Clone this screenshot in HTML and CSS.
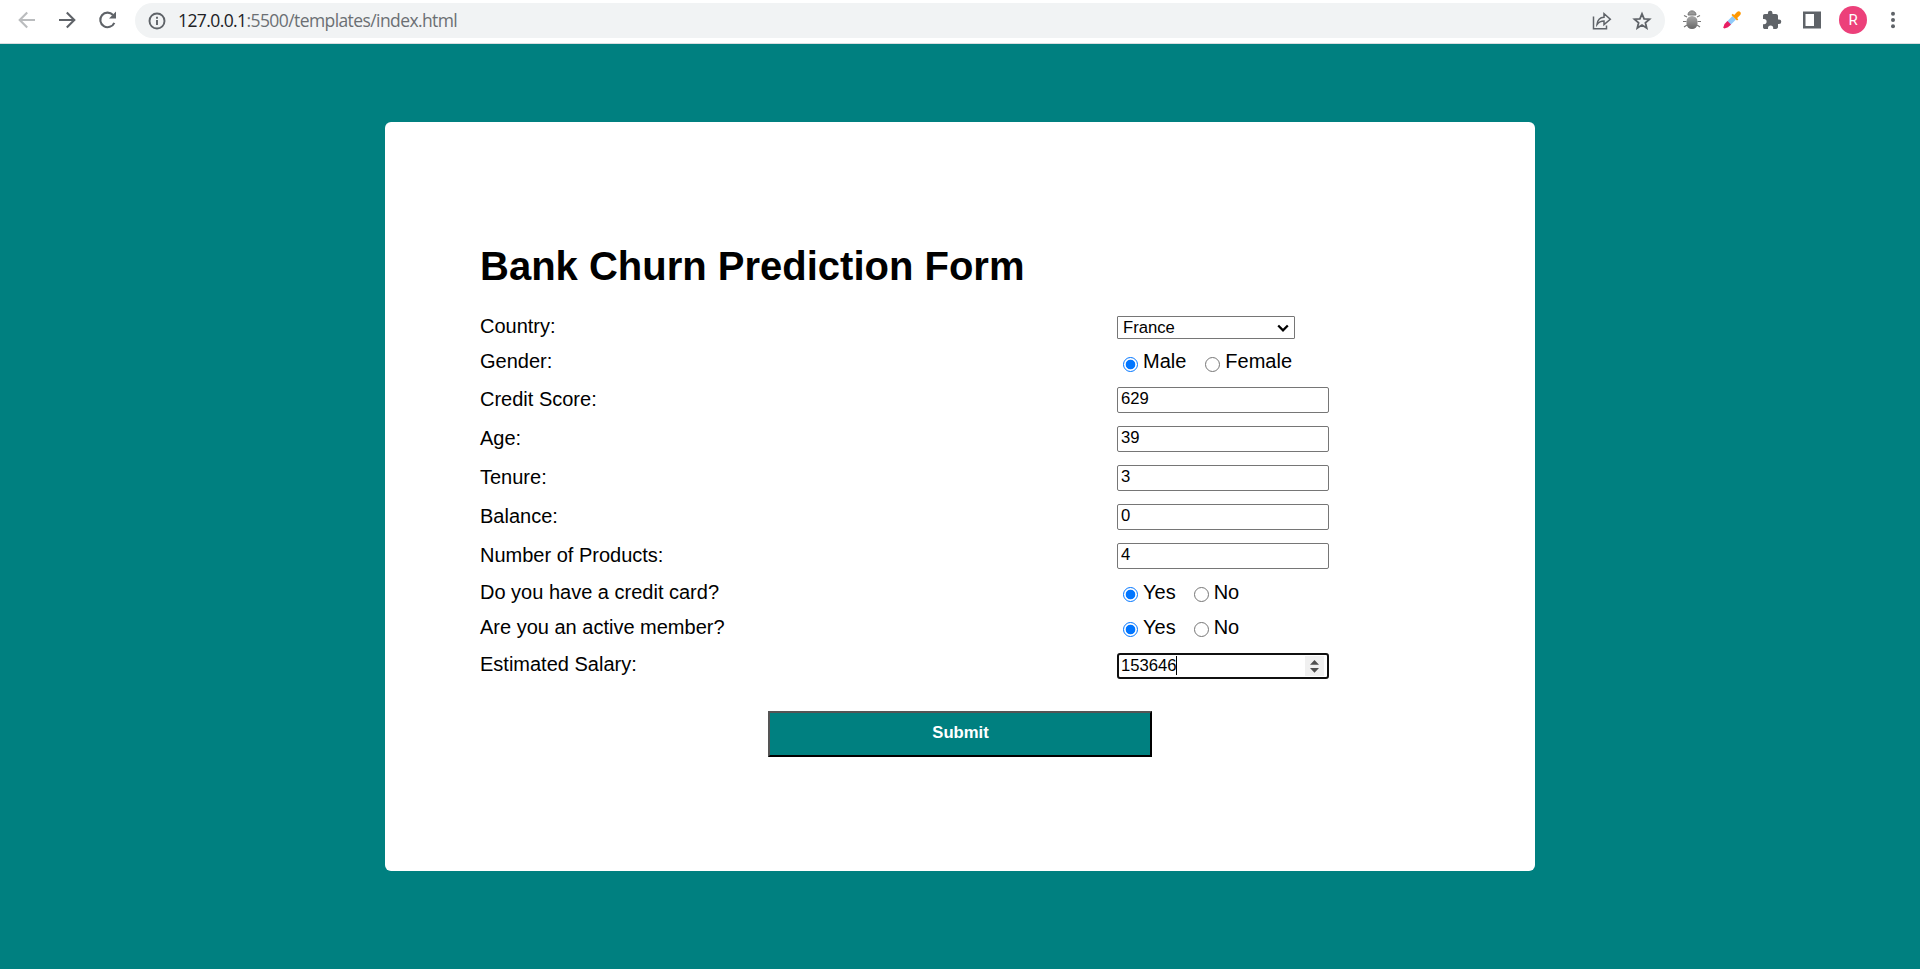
FILE: index.html
```html
<!DOCTYPE html>
<html lang="en">
<head>
<meta charset="utf-8">
<title>Bank Churn Prediction Form</title>
<link rel="stylesheet" href="styles.css">
</head>
<body>
<header class="toolbar">
  <nav class="nav">
    <svg class="nav-icon faded" viewBox="0 0 20 20"><path d="M18 10H3M10.200 2.500 2.700 10l7.500 7.500"/></svg>
    <svg class="nav-icon" viewBox="0 0 20 20"><path d="M2 10h15M9.800 2.500l7.500 7.500-7.500 7.500"/></svg>
    <svg class="nav-icon" viewBox="0 0 20 20"><path d="M17.300 12.800a7.300 7.300 0 1 1-1.300-7.800"/><path class="solid" d="M19 1.500v7h-7z"/></svg>
  </nav>
  <div class="address">
    <svg class="info" viewBox="0 0 18 18"><circle cx="9" cy="9" r="7.500"/><path d="M9 8v5M9 4.800v2"/></svg>
    <span class="url"><span class="host">127.0.0.1</span>:5500/templates/index.html</span>
    <svg class="share" viewBox="0 0 20 20"><path d="M1.500 5.500V17.700H14.500V14.500M5 13.500c.5-4.500 3-7 7-7.200V2.700l6.300 5.500-6.300 5.400V10c-3 0-5 .8-7 3.500z"/></svg>
    <svg class="star" viewBox="0 0 20 20"><path d="M10 2.800l2.100 5 5.400.4-4.100 3.500 1.300 5.300-4.700-2.900-4.700 2.900 1.300-5.300-4.100-3.500 5.400-.4z"/></svg>
  </div>
  <div class="extensions">
    <svg viewBox="0 0 20 20"><defs><linearGradient id="shell" x2="0" y2="1"><stop stop-color="#aaa"/><stop offset="1" stop-color="#666"/></linearGradient></defs><path d="M5 7 2 5.500M4.500 11.500H1M5 15l-3 2M15 7l3-1.500M15.500 11.500H19M15 15l3 2" stroke="#777" stroke-width="1.200" fill="none"/><path d="M6 5c0-5.500 8-5.500 8 0z" fill="#999" stroke="#777"/><rect x="4.500" y="6" width="11" height="13" rx="5.500" fill="url(#shell)"/></svg>
    <svg viewBox="0 0 20 20"><path d="M10.500 6 14 9.500 7.500 16 4 12.500z" fill="#90caf9"/><path d="M5.500 11 9 14.500l-3 2.700-3.500 1.300-1.300-.7 1.300-3.800z" fill="#e91e63"/><path d="m9.500 5 1.200-1.200 1.500 1.100 2.800-3c2.500-2 5 .8 3.200 3.200l-3 2.800 1.100 1.500-1.300 1.200z" fill="#ff9800"/></svg>
    <svg viewBox="0 0 20 20"><path d="M17 9.500h-1V6c0-1.100-.9-2-2-2h-3.500V3a2.300 2.300 0 0 0-4.600 0v1H2.800c-1.100 0-1.800.9-1.800 1.900V9h1a2.600 2.600 0 0 1 0 5.200H1v3c0 1.100.9 1.800 1.900 1.800H6v-1a2.600 2.600 0 0 1 5.200 0v1H14c1.100 0 2-.9 2-1.900V14.100h1a2.300 2.300 0 0 0 0-4.600z" fill="#5f6368"/></svg>
    <svg viewBox="0 0 20 20"><path d="M1 1.500h18v17H1zM3.500 4v12H12V4z" fill="#5f6368" fill-rule="evenodd"/></svg>
    <span class="avatar">R</span>
    <svg class="menu" viewBox="0 0 20 20"><circle cx="10" cy="3.800" r="2"/><circle cx="10" cy="10" r="2"/><circle cx="10" cy="16.200" r="2"/></svg>
  </div>
</header>
<main class="page">
  <form class="card">
    <h1 class="title">Bank Churn Prediction Form</h1>
    <div class="row short"><span class="label">Country:</span><div class="select"><span>France</span><svg class="chevron" viewBox="0 0 12 8"><path d="M1.200 1.500 6 6.300l4.800-4.800"/></svg></div></div>
    <div class="row short"><span class="label">Gender:</span><div class="choices"><input type="radio" class="radio" name="gender" checked><span class="choice">Male</span><input type="radio" class="radio" name="gender"><span class="choice">Female</span></div></div>
    <div class="row"><span class="label">Credit Score:</span><input class="field" value="629"></div>
    <div class="row"><span class="label">Age:</span><input class="field" value="39"></div>
    <div class="row"><span class="label">Tenure:</span><input class="field" value="3"></div>
    <div class="row"><span class="label">Balance:</span><input class="field" value="0"></div>
    <div class="row"><span class="label">Number of Products:</span><input class="field" value="4"></div>
    <div class="row short"><span class="label">Do you have a credit card?</span><div class="choices"><input type="radio" class="radio" name="card" checked><span class="choice yes">Yes</span><input type="radio" class="radio" name="card"><span class="choice">No</span></div></div>
    <div class="row short"><span class="label">Are you an active member?</span><div class="choices"><input type="radio" class="radio" name="member" checked><span class="choice yes">Yes</span><input type="radio" class="radio" name="member"><span class="choice">No</span></div></div>
    <div class="row"><span class="label">Estimated Salary:</span><div class="field focused"><span>153646</span><i class="caret"></i><svg class="spinner" viewBox="0 0 19 20"><path d="M5 8.700 9.500 4 14 8.700zM5 12h9l-4.500 4.700z"/></svg></div></div>
    <button type="button" class="submit">Submit</button>
  </form>
</main>
</body>
</html>
```

FILE: styles.css
```css
* { box-sizing: border-box; }
body { margin: 0; height: 969px; overflow: hidden; display: flex; flex-direction: column; background: #008080; font-family: "Liberation Sans", Arial, sans-serif; color: #000; }
.toolbar { display: flex; height: 44px; flex: none; background: #fff; border-bottom: 1px solid #d9dde0; padding-top: 3px; }
.nav { display: flex; gap: 20px; width: 135px; height: 34px; align-items: center; padding-left: 17px; }
.nav-icon { width: 20px; height: 20px; fill: none; stroke: #5f6368; stroke-width: 2.1; flex: none; }
.nav-icon .solid { fill: #5f6368; stroke: none; }
.nav-icon.faded { stroke: #babcbe; }
.address { width: 1530px; height: 35px; border-radius: 18px; background: #f1f3f4; display: flex; align-items: center; padding: 0 13px 0 13px; }
.info { width: 18px; height: 18px; fill: none; stroke: #5f6368; stroke-width: 1.9; }
.url { flex: 1; margin-left: 12px; padding-bottom: 1px; font: 17.5px/33px "Open Sans", sans-serif; letter-spacing: -0.59px; color: #6b6f73; }
.host { color: #202124; }
.share, .star { width: 20px; height: 20px; fill: none; stroke: #5f6368; stroke-width: 1.5; }
.star { margin-left: 20px; stroke-width: 1.8; }
.extensions { display: flex; align-items: center; gap: 20px; height: 34px; padding-left: 17px; }
.extensions svg { width: 20px; height: 20px; flex: none; }
.extensions .menu { fill: #5f6368; margin-left: -1px; }
.avatar { width: 28px; height: 28px; margin: 0 -3px; border-radius: 50%; background: #ec407a; color: #fff; font: 15px/28px Roboto, sans-serif; text-align: center; }
.page { padding-top: 78px; display: flex; justify-content: center; }
.card { width: 1150px; height: 749px; border-radius: 6px; background: #fff; padding: 121px 95px 0; display: flex; flex-direction: column; }
.title { margin: 0 0 21px; font-size: 40px; line-height: 46px; }
.row { display: grid; grid-template-columns: 637px 1fr; height: 39px; align-items: center; }
.row.short { height: 35.25px; }
.label { font-size: 20px; line-height: 23px; padding-bottom: 2px; }
.select { width: 178px; height: 23px; border: 1px solid #767676; border-radius: 1px; display: flex; align-items: center; justify-content: space-between; padding: 0 5px; font-size: 16.67px; }
.chevron { width: 12px; height: 8px; fill: none; stroke: #000; stroke-width: 2.3; }
.choices { display: flex; align-items: center; padding-left: 6px; font-size: 20px; line-height: 23px; }
.radio { appearance: none; width: 15px; height: 15px; margin: 3px 5px 0 0; border: 1px solid #767676; border-radius: 50%; background: #fff; }
.radio:checked { border: 1.5px solid #0075ff; background: radial-gradient(circle, #0075ff 4.4px, #fff 5.2px); }
.choice { margin-right: 19px; padding-bottom: 2px; }
.choice.yes { margin-right: 18px; }
.field { width: 212px; height: 26px; border: 1px solid #767676; border-radius: 2px; padding: 0 3px 2px; font: 16.67px/22px "Liberation Sans", Arial, sans-serif; color: #000; background: #fff; }
.focused { border: 2px solid #101010; border-radius: 3px; padding: 0 2px; display: flex; line-height: 21px; }
.caret { width: 1px; height: 19px; background: #000; margin: 1px 0 0 -1px; }
.spinner { width: 19px; height: 20px; margin: 1px 1px 0 auto; background: #f0f0f0; fill: #505050; }
.submit { width: 384px; height: 46px; margin: 26px auto 0; border: 2px solid; border-color: #555 #000 #000 #555; border-radius: 0; padding: 0 0 2px 1px; background: #008080; color: #fff; font: bold 16.67px "Liberation Sans", Arial, sans-serif; }
```
